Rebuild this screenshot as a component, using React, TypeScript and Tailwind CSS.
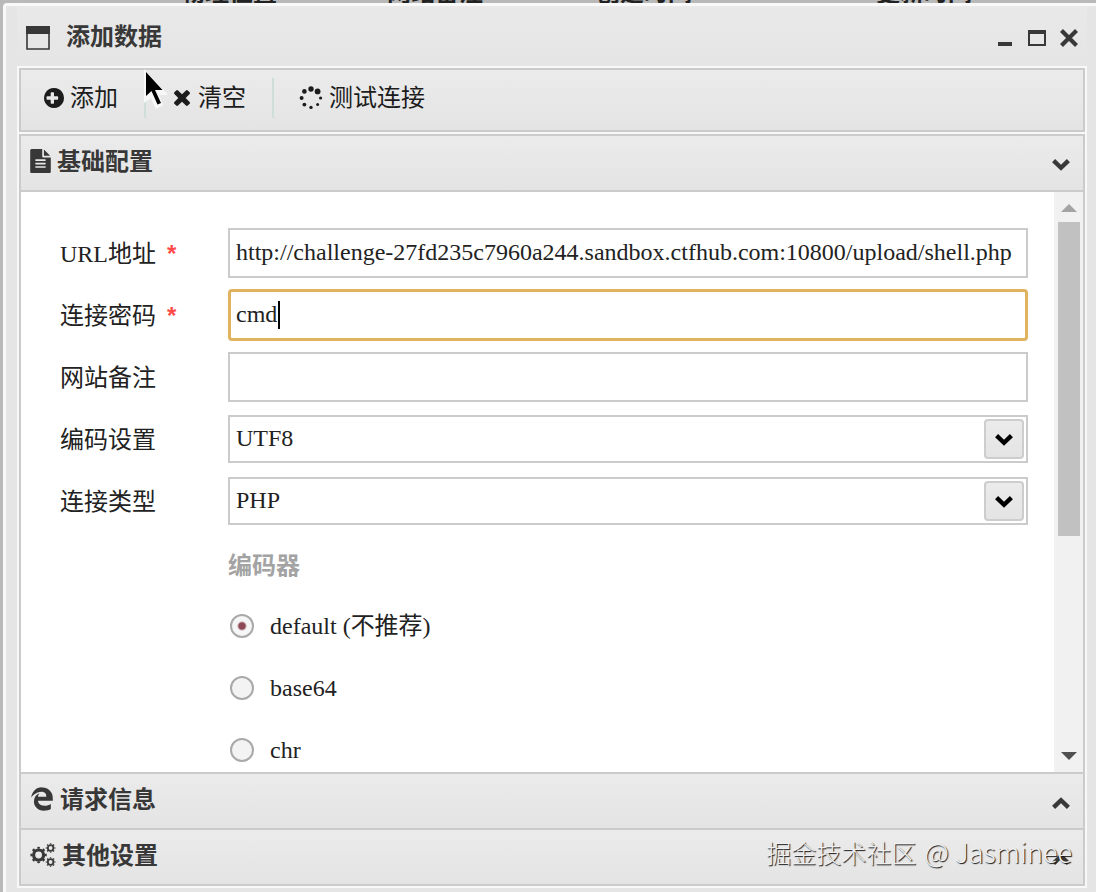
import type { ReactNode } from "react";
import { FaEdgeLegacy } from "react-icons/fa";

const bar = "bg-linear-to-b from-[#ebebeb] to-[#e4e4e4]";
const serif = "font-['Liberation_Serif','Noto_Sans_CJK_SC',serif]";

function PlusCircle() {
  return (
    <svg viewBox="128 128 1536 1536" className="size-5" fill="currentColor" aria-hidden="true">
      <path d="M1216 960v-128q0-26-19-45t-45-19h-256v-256q0-26-19-45t-45-19h-128q-26 0-45 19t-19 45v256h-256q-26 0-45 19t-19 45v128q0 26 19 45t45 19h256v256q0 26 19 45t45 19h128q26 0 45-19t19-45v-256h256q26 0 45-19t19-45zm448-64q0 209-103 385.5t-279.5 279.5-385.5 103-385.5-103-279.5-279.5-103-385.5 103-385.5 279.5-279.5 385.5-103 385.5 103 279.5 279.5 103 385.5z" />
    </svg>
  );
}

function Times() {
  return (
    <svg viewBox="302 366 1188 1188" className="size-4" fill="currentColor" aria-hidden="true">
      <path d="M1490 1322q0 40-28 68l-136 136q-28 28-68 28t-68-28l-294-294-294 294q-28 28-68 28t-68-28l-136-136q-28-28-28-68t28-68l294-294-294-294q-28-28-28-68t28-68l136-136q28-28 68-28t68 28l294 294 294-294q28-28 68-28t68 28l136 136q28 28 28 68t-28 68l-294 294 294 294q28 28 28 68z" />
    </svg>
  );
}

function FileText() {
  return (
    <svg viewBox="128 0 1536 1792" className="h-6 w-[21px]" fill="currentColor" aria-hidden="true">
      <path d="M1596 476q14 14 28 36h-472v-472q22 14 36 28zm-476 164h544v1056q0 40-28 68t-68 28h-1344q-40 0-68-28t-28-68v-1600q0-40 28-68t68-28h800v544q0 40 28 68t68 28zm160 736v-64q0-14-9-23t-23-9h-704q-14 0-23 9t-9 23v64q0 14 9 23t23 9h704q14 0 23-9t9-23zm0-256v-64q0-14-9-23t-23-9h-704q-14 0-23 9t-9 23v64q0 14 9 23t23 9h704q14 0 23-9t9-23zm0-256v-64q0-14-9-23t-23-9h-704q-14 0-23 9t-9 23v64q0 14 9 23t23 9h704q14 0 23-9t9-23z" />
    </svg>
  );
}

function Spinner() {
  const dots = [
    [12, 3, 2.7], [18.6, 5.4, 2.9], [21.6, 12, 1.6], [18.6, 18.6, 1.5],
    [12, 21.4, 1.7], [5.4, 18.6, 1.9], [2.6, 12, 2], [5.4, 5.4, 2.3],
  ];
  return (
    <svg viewBox="0 0 24 24" className="size-6" fill="currentColor" aria-hidden="true">
      {dots.map(([x, y, r]) => <circle key={`${x}-${y}`} cx={x} cy={y} r={r} />)}
    </svg>
  );
}

function Gear({ cx, cy, r, w }: { cx: number; cy: number; r: number; w: number }) {
  return (
    <g fill="none" stroke="currentColor">
      <circle cx={cx} cy={cy} r={r} strokeWidth={w} />
      <circle cx={cx} cy={cy} r={r + w / 2 + 0.6} strokeWidth={w * 0.6} pathLength={80} strokeDasharray="4.5 5.5" strokeDashoffset={2.25} />
    </g>
  );
}

function Cogs() {
  return (
    <svg viewBox="0 0 26 24" className="h-6 w-[26px]" aria-hidden="true">
      <Gear cx={8.6} cy={12} r={5} w={3.2} />
      <Gear cx={20.6} cy={5} r={2.8} w={1.8} />
      <Gear cx={20.6} cy={19} r={2.8} w={1.8} />
    </svg>
  );
}

function Chevron({ up = false }: { up?: boolean }) {
  return (
    <svg viewBox="0 0 18 12" className="h-3 w-[18px]" fill="none" stroke="currentColor" strokeWidth="4.4" aria-hidden="true">
      <path d={up ? "M1.6 10.3 9 3.2l7.4 7.1" : "M1.6 1.7 9 8.8l7.4-7.1"} />
    </svg>
  );
}

function ToolButton({ icon, children }: { icon: ReactNode; children: ReactNode }) {
  return (
    <button type="button" className="flex items-center gap-[6px] text-2xl leading-8 text-[#1c1c1c]">
      {icon}
      <span className="pb-1">{children}</span>
    </button>
  );
}

function SectionHeader({ icon, title, open = false }: { icon: ReactNode; title: string; open?: boolean }) {
  return (
    <button
      type="button"
      aria-expanded={open}
      className={`flex h-[54px] w-full shrink-0 items-center gap-[6px] pr-[13px] pb-1 pl-[9px] text-left text-[#383838] ${bar}`}
    >
      {icon}
      <span className="pb-[2px] text-2xl leading-8 font-bold">{title}</span>
      <span className="ml-auto pt-2">
        <Chevron up={!open} />
      </span>
    </button>
  );
}

function Row({ id, label, required = false, children }: { id: string; label: string; required?: boolean; children: ReactNode }) {
  return (
    <div className="flex h-[62px] items-center">
      <label htmlFor={id} className="flex w-[168px] shrink-0 pt-[2px]">
        {label}
        {required && <span className="ml-[11px] font-['Liberation_Sans',sans-serif] font-bold text-[#ff4a4a]">*</span>}
      </label>
      <div className="relative min-w-0 flex-1">{children}</div>
    </div>
  );
}

const field = "block w-full border-2 border-[#cbcbcb] bg-white px-[6px] pb-[2px] outline-none";

function SelectField({ id, value }: { id: string; value: string }) {
  return (
    <>
      <select id={id} defaultValue={value} className={`h-12 appearance-none ${field}`}>
        <option>{value}</option>
      </select>
      <span className={`pointer-events-none absolute top-1 right-1 flex h-10 w-10 items-center justify-center rounded border-2 border-[#cdcdcd] text-black ${bar}`}>
        <span className="pt-[2px]">
          <Chevron />
        </span>
      </span>
    </>
  );
}

function Encoder({ label, checked = false }: { label: string; checked?: boolean }) {
  return (
    <label className="flex h-[62px] items-center gap-4">
      <input
        type="radio"
        name="encoder"
        defaultChecked={checked}
        className="ml-[2px] size-6 appearance-none rounded-full border-2 border-[#a9a9a9] bg-[#f3f3f3] checked:bg-[radial-gradient(circle,#8d4a56_3px,#f6f6f6_5px)]"
      />
      <span>{label}</span>
    </label>
  );
}

export default function App() {
  return (
    <div className="relative flex h-screen flex-col overflow-hidden bg-[#b9b9b9] font-['Noto_Sans_CJK_SC',sans-serif]">
      <div className="flex h-[3px] shrink-0 items-end overflow-hidden pl-[181px] text-2xl leading-6 font-bold text-[#222]" aria-hidden="true">
        <span className="w-[206px]">物理位置</span>
        <span className="w-[209px]">网站备注</span>
        <span className="w-[280px]">创建时间</span>
        <span>更新时间</span>
      </div>

      <main className="ml-[3px] flex min-h-0 flex-1 flex-col rounded-tl border-t-[3px] border-l-[3px] border-[#f9f9f9] bg-[#e5e5e5] pr-[9px] pb-1 pl-[11px]">
        <header className="flex h-[60px] shrink-0 items-center bg-linear-to-b from-[#e9e9e9] to-[#e5e5e5] pr-[9px] pl-[9px] text-[#383838]">
          <svg viewBox="0 0 24 24" className="mt-1 size-6" aria-hidden="true">
            <path d="M1 1h22v22H1z" fill="none" stroke="currentColor" strokeWidth="1.6" />
            <path d="M0 0h24v8H0z" fill="currentColor" />
          </svg>
          <h1 className="ml-4 pb-[3px] text-2xl leading-8 font-bold">添加数据</h1>
          <div className="mt-1 ml-auto flex items-center gap-4">
            <button type="button" aria-label="最小化">
              <svg viewBox="0 0 14 18" className="h-[18px] w-[14px]" aria-hidden="true">
                <path d="M0 13h14v4H0z" fill="currentColor" />
              </svg>
            </button>
            <button type="button" aria-label="最大化">
              <svg viewBox="0 0 18 16" className="h-4 w-[18px]" aria-hidden="true">
                <path d="M1 1h16v14H1z" fill="none" stroke="currentColor" strokeWidth="2" />
                <path d="M0 0h18v4H0z" fill="currentColor" />
              </svg>
            </button>
            <button type="button" aria-label="关闭" className="-ml-[2px]">
              <svg viewBox="0 0 18 18" className="size-[18px]" aria-hidden="true">
                <path d="M1.5 1.5l15 15M16.5 1.5l-15 15" stroke="currentColor" strokeWidth="4.2" />
              </svg>
            </button>
          </div>
        </header>

        <div className="flex min-h-0 flex-1 flex-col gap-[2px] border-2 border-[#f8f8f8] bg-[#f8f8f8]">
          <div className={`flex h-16 shrink-0 items-center border-2 border-[#cbcbcb] pb-1 pl-[23px] ${bar}`}>
            <ToolButton icon={<PlusCircle />}>添加</ToolButton>
            <span className="mr-7 ml-[26px] h-10 w-[2px] bg-[#cfdedb]" />
            <ToolButton icon={<Times />}><span className="pl-[2px]">清空</span></ToolButton>
            <span className="mr-[25px] ml-[26px] h-10 w-[2px] bg-[#cfdedb]" />
            <ToolButton icon={<Spinner />}>测试连接</ToolButton>
          </div>

          <div className="flex min-h-0 flex-1 flex-col border-2 border-[#cbcbcb]">
            <SectionHeader icon={<FileText />} title="基础配置" open />

            <section className="flex min-h-0 flex-1 border-y-2 border-[#cbcbcb] bg-white">
              <form className={`min-w-0 flex-1 overflow-hidden pt-[30px] pr-[26px] pl-[39px] text-2xl text-[#222] ${serif}`}>
                <Row id="url" label="URL地址" required>
                  <input id="url" type="text" defaultValue="http://challenge-27fd235c7960a244.sandbox.ctfhub.com:10800/upload/shell.php" className={`h-[50px] ${field}`} />
                </Row>
                <Row id="password" label="连接密码" required>
                  <input id="password" type="text" defaultValue="cmd" className="block h-[52px] w-full rounded-sm border-[3px] border-[#dfb360] bg-white px-[5px] pb-[2px] caret-transparent outline-none" />
                  <span className="absolute top-3 left-[50px] h-7 w-[2px] bg-black" />
                </Row>
                <Row id="note" label="网站备注">
                  <input id="note" type="text" className={`h-[50px] ${field}`} />
                </Row>
                <Row id="encode" label="编码设置">
                  <SelectField id="encode" value="UTF8" />
                </Row>
                <Row id="type" label="连接类型">
                  <SelectField id="type" value="PHP" />
                </Row>
                <fieldset className="pl-[168px]">
                  <legend className="flex h-[63px] items-center pt-1 font-bold text-[#a3a3a3]">编码器</legend>
                  <Encoder label="default (不推荐)" checked />
                  <Encoder label="base64" />
                  <Encoder label="chr" />
                </fieldset>
              </form>
              <div className="flex w-[29px] shrink-0 flex-col items-center bg-[#f1f1f1] pt-3 pb-3" aria-hidden="true">
                <svg viewBox="0 0 16 8" className="h-2 w-4">
                  <path d="M0 8 8 0l8 8z" fill="#a3a3a3" />
                </svg>
                <div className="mt-[10px] h-[314px] w-[22px] bg-[#c1c1c1]" />
                <svg viewBox="0 0 16 8" className="mt-auto h-2 w-4">
                  <path d="M0 0h16L8 8z" fill="#505050" />
                </svg>
              </div>
            </section>

            <SectionHeader icon={<FaEdgeLegacy className="h-6 w-6" aria-hidden="true" />} title="请求信息" />
            <div className="border-t-2 border-[#cbcbcb]">
              <SectionHeader icon={<Cogs />} title="其他设置" />
            </div>
          </div>
        </div>
      </main>

      <svg viewBox="0 0 24 40" className="pointer-events-none absolute top-[69px] left-[144px] h-10 w-6" aria-hidden="true">
        <path d="M0 0v34l7-5 4.500 11 8-3.500-4.500-10.500h9z" fill="#f8f8f8" />
        <path d="M2 3v24l5.500-5 6 13.500 3.500-1.500-6-13h7.500z" fill="#000" />
      </svg>

      <p className="pointer-events-none absolute right-6 bottom-[22px] flex items-baseline gap-2 text-[25px] leading-9 font-light text-[#efefef] [text-shadow:1px_1px_1px_#111]">
        <span>掘金技术社区</span>
        <span className="text-[27px]">@ Jasminee</span>
      </p>
    </div>
  );
}
